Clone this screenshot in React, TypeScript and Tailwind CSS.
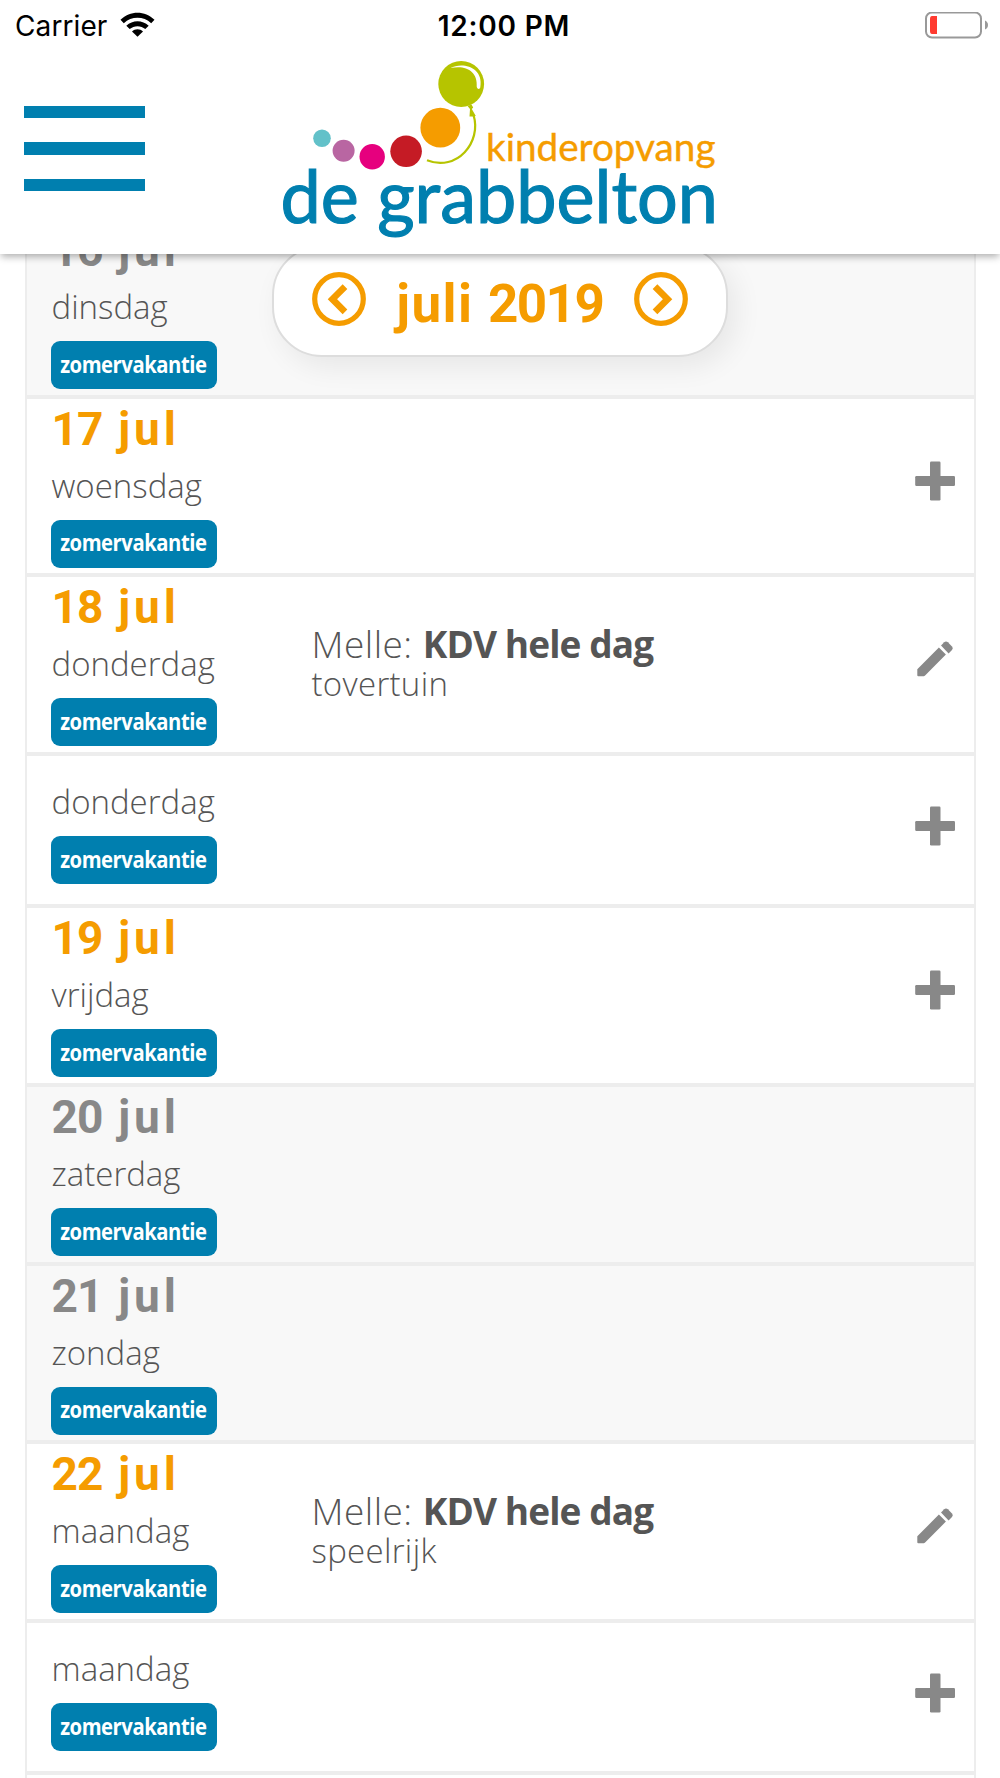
import React from 'react';

interface DayEntry {
  date?: [string, string];
  weekday: string;
  closed?: boolean;
  child?: string;
  care?: string;
  group?: string;
}

const DAYS: DayEntry[] = [
  { date: ['16', 'jul'], weekday: 'dinsdag', closed: true },
  { date: ['17', 'jul'], weekday: 'woensdag' },
  { date: ['18', 'jul'], weekday: 'donderdag', child: 'Melle', care: 'KDV hele dag', group: 'tovertuin' },
  { weekday: 'donderdag' },
  { date: ['19', 'jul'], weekday: 'vrijdag' },
  { date: ['20', 'jul'], weekday: 'zaterdag', closed: true },
  { date: ['21', 'jul'], weekday: 'zondag', closed: true },
  { date: ['22', 'jul'], weekday: 'maandag', child: 'Melle', care: 'KDV hele dag', group: 'speelrijk' },
  { weekday: 'maandag' },
];

const PlusIcon = () => (
  <svg className="size-10" viewBox="0 0 40 40" fill="#888888">
    <rect x="15" y="0.5" width="10.5" height="39" rx="1.2" />
    <rect x="0.2" y="15" width="39.8" height="10" rx="1.2" />
  </svg>
);

const PencilIcon = () => (
  <svg className="size-10" viewBox="0 0 40 40" fill="#888888">
    <path d="M2.3 30.2 23.9 8.6 30.9 15.6 10.6 36.1Q9.9 37.2 8.8 37.2H3.3Q2.3 37.2 2.3 36.2Z" />
    <path d="M26 6.5 29.2 3.3Q31 1.8 32.9 3.3L37 7.5Q38.6 9.3 37 11.1L33.6 14.4Z" />
  </svg>
);

const ArrowIcon = ({ flip }: { flip?: boolean }) => (
  <svg className={`size-[54px] ${flip ? '-scale-x-100' : ''}`} viewBox="0 0 54 54" fill="none" stroke="#f59c00">
    <circle cx="27" cy="27" r="24.3" strokeWidth="5.2" />
    <path d="M33 14.6 20.4 27.2 33 39.8" strokeWidth="6.6" />
  </svg>
);

const Logo = () => (
  <svg className="h-[190px] w-[440px] overflow-visible" viewBox="280 56 440 190">
    <circle cx="322" cy="138.3" r="8.8" fill="#62c1c9" />
    <circle cx="343.6" cy="150.8" r="11" fill="#b966a2" />
    <circle cx="372.2" cy="156.8" r="12.7" fill="#e6007e" />
    <circle cx="406.1" cy="151.3" r="15.8" fill="#c51b25" />
    <circle cx="440.3" cy="127.7" r="19.9" fill="#f59c00" />
    <circle cx="461.2" cy="84" r="22.9" fill="#b6c400" />
    <path d="M450.5 68.1C462 61.5 484 67 480.3 87.2 480 89.5 477 89.7 476.7 86.5 478 71.5 465.5 64.5 450.5 68.1Z" fill="#fff" />
    <path d="M467.5 106 471.5 104.5 473.2 107.5 471.8 109 475.8 116 473.5 116.5 469.5 116.5 470 109Z" fill="#b6c400" />
    <path d="M473.5 115C482 142 457 172 427 160.3" fill="none" stroke="#b6c400" strokeWidth="2.2" />
    <text x="486" y="160.5" fontFamily="Lato, sans-serif" fontSize="39.5" fill="#f59c00" stroke="#f59c00" strokeWidth="0.4" textLength="229.5" lengthAdjust="spacingAndGlyphs">kinderopvang</text>
    <text x="280.5" y="223" fontFamily="Lato, sans-serif" fontSize="73" fill="#007faf" stroke="#007faf" strokeWidth="1.2" textLength="437.5" lengthAdjust="spacingAndGlyphs">de grabbelton</text>
  </svg>
);

const StatusBar = () => (
  <div className="grid h-[50px] grid-cols-3 items-center pt-[1px] pr-[12px] pl-[15px] font-['Inter',sans-serif] text-[28px] leading-[50px] text-black">
    <div className="flex items-center gap-[13px]">
      <span className="tracking-[0.1px]">Carrier</span>
      <svg className="-mt-[2px] h-[26px] w-[35px]" viewBox="0 0 35 26">
        <path d="M0.5 7.8C10-1.7 25-1.7 34.5 7.8L31.2 11.2C23.5 4 11.5 4 3.8 11.2Z" />
        <path d="M6.3 13.7C12.5 7.7 22.5 7.7 28.7 13.7L25.3 17.1C21 13.2 14 13.2 9.7 17.1Z" />
        <path d="M12 19.4C15 16.6 20 16.6 23 19.4L17.5 24.8Z" />
      </svg>
    </div>
    <div className="pl-[5px] text-center font-semibold tracking-[0.8px]">12:00 PM</div>
    <div className="flex justify-end">
      <svg className="h-[28px] w-[64px]" viewBox="0 0 64 28">
        <rect x="2" y="0.5" width="55" height="25" rx="6" fill="none" stroke="#999" strokeWidth="2" />
        <path d="M8 4H13V22H8Q6 22 6 19V7Q6 4 8 4Z" fill="#ff3b30" />
        <path d="M61 8.5Q64 10 64 13T61 17.5Z" fill="#999" />
      </svg>
    </div>
  </div>
);

const Header = () => (
  <header className="relative z-20 h-[254px] bg-white shadow-[0_4px_7px_-1px_rgba(0,0,0,0.3)]">
    <StatusBar />
    <div className="flex items-start">
      <button className="mt-[56px] ml-[24px] flex w-[121px] flex-col gap-[24.3px]">
        <span className="h-[12.2px] w-full bg-[#007faf]" />
        <span className="h-[12.2px] w-full bg-[#007faf]" />
        <span className="h-[12.2px] w-full bg-[#007faf]" />
      </button>
      <div className="mt-[6px] ml-[135px]">
        <Logo />
      </div>
    </div>
  </header>
);

const MonthPicker = () => (
  <div className="absolute top-[245px] left-[272px] z-10 flex h-[112px] w-[455.5px] items-start justify-between rounded-[50px] border-2 border-[#dddddd] bg-white px-[38px] pt-[25px] shadow-[8px_10px_28px_rgba(0,0,0,0.07)]">
    <ArrowIcon />
    <span className="mt-[5px] font-['Roboto',sans-serif] text-[53px] leading-[54px] font-bold tracking-[1.4px] text-[#f59c00]">
      juli <span className="tracking-[-1.6px]">2019</span>
    </span>
    <ArrowIcon flip />
  </div>
);

const DayRow: React.FC<{ day: DayEntry }> = ({ day }) => (
  <div
    className={`flex border-b-[4.6px] border-[#ededed] pl-6 ${day.closed ? 'bg-[#f8f8f8]' : 'bg-white'} ${
      day.date ? 'h-[178.68px]' : 'h-[152.2px]'
    }`}
  >
    <div className={`flex w-[261px] shrink-0 flex-col items-start ${day.date ? 'pt-0' : 'pt-[21px]'}`}>
      {day.date && (
        <span
          className={`ml-px h-[62px] font-['Roboto',sans-serif] text-[46px] leading-[61px] font-bold tracking-[4px] ${
            day.closed ? 'text-[#888888]' : 'text-[#f59c00]'
          }`}
        >
          <span className="tracking-[-0.8px]">{day.date[0]}</span> {day.date[1]}
        </span>
      )}
      <span className="ml-px h-[50px] font-['Open_Sans',sans-serif] text-[33px] leading-[50px] font-light text-[#555555]">
        {day.weekday}
      </span>
      <span className="mt-[9px] flex h-12 w-[166px] items-center justify-center rounded-[9px] bg-[#007faf] font-['Open_Sans',sans-serif] text-[22.5px] font-bold tracking-[-0.5px] text-white">
        <span className="-mt-px scale-x-90">zomervakantie</span>
      </span>
    </div>
    <div className="flex-1 pt-[47px] font-['Open_Sans',sans-serif] leading-[40px] text-[#555555]">
      {day.child && (
        <>
          <p className="text-[37px] font-light tracking-[0.5px]">
            {day.child}: <b className="font-bold tracking-[-0.9px]">{day.care}</b>
          </p>
          <p className="text-[33px] font-light tracking-[0.3px]">{day.group}</p>
        </>
      )}
    </div>
    {!day.closed && (
      <button className={`mr-[19px] self-start ${day.date ? 'mt-[62px]' : 'mt-[50px]'}`}>
        {day.child ? <PencilIcon /> : <PlusIcon />}
      </button>
    )}
  </div>
);

const App: React.FC = () => {
  return (
    <div className="relative h-[1778px] w-[1000px] overflow-hidden bg-white">
      <Header />
      <MonthPicker />
      <main className="mx-[24.5px] -mt-[34px] h-[1560px] border-x-[2.5px] border-[#ededed]">
        {DAYS.map((day, i) => (
          <DayRow key={i} day={day} />
        ))}
      </main>
    </div>
  );
};

export default App;
